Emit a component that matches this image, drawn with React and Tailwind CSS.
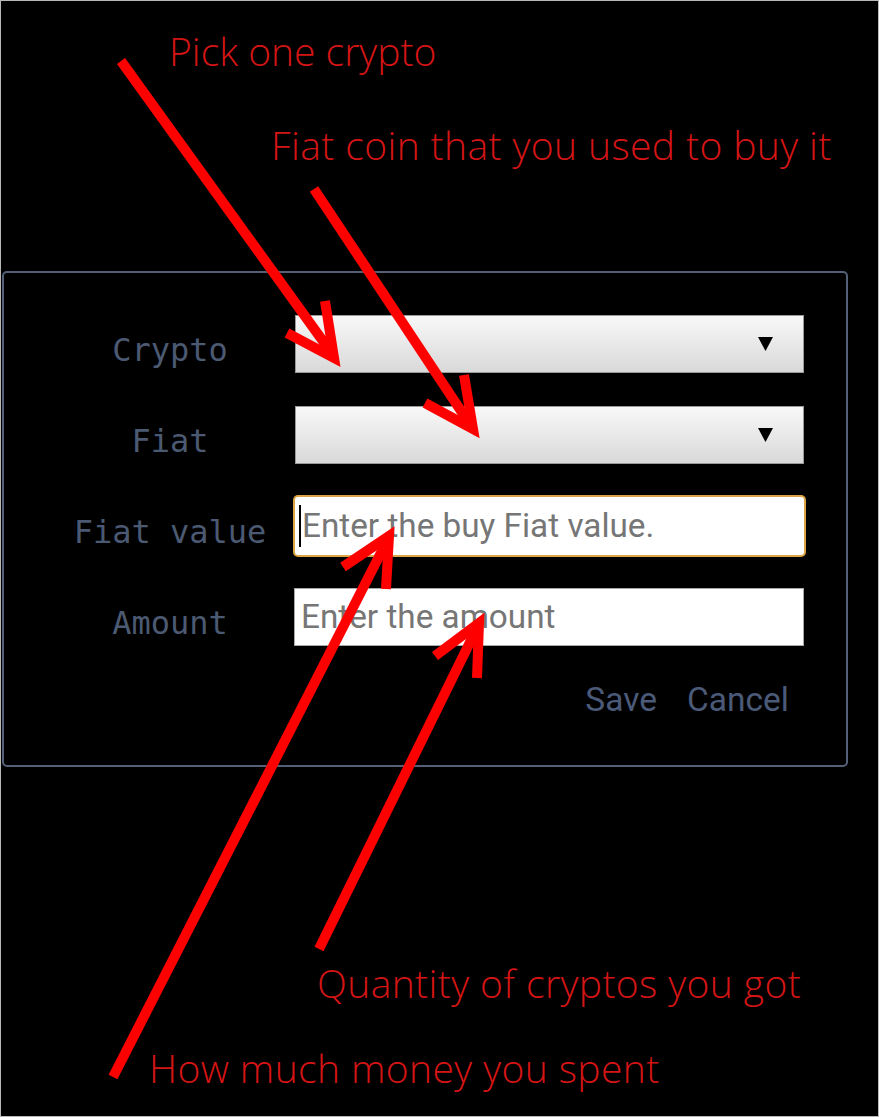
import React from "react";

function Arrow({ shaft, head }) {
  return (
    <g>
      <line x1={shaft[0]} y1={shaft[1]} x2={shaft[2]} y2={shaft[3]} stroke="#ff0000" strokeWidth="10" />
      <polyline points={head} fill="none" stroke="#ff0000" strokeWidth="10" strokeLinejoin="miter" strokeMiterlimit="10" />
    </g>
  );
}

function SelectBox() {
  return (
    <div className="flex h-[58px] w-[509px] items-center justify-end border border-[#9a9a9a] bg-gradient-to-b from-[#f8f8f8] to-[#d9d9d9] pr-[30px]">
      <svg width="15" height="14" viewBox="0 0 15 14">
        <polygon points="0,0 15,0 7.5,14" fill="#000" />
      </svg>
    </div>
  );
}

function Label({ children }) {
  return (
    <div className="w-[240px] pt-[12px] text-center text-[32px] leading-none text-[#4b5a72] [font-family:'DejaVu_Sans_Mono',monospace] whitespace-pre">
      {children}
    </div>
  );
}

export default function App() {
  return (
    <div className="relative h-[1117px] w-[879px] overflow-hidden border border-[#b8b8b8] bg-black">
      <div className="pt-[270px] pl-[1px]">
        <div className="w-[846px] rounded-[5px] border-2 border-[#536078] pt-[42px] pb-[44px] pl-[46px]">
          <div className="flex flex-col gap-[33px]">
            <div className="flex items-center">
              <Label>Crypto</Label>
              <div className="ml-[5px]">
                <SelectBox />
              </div>
            </div>
            <div className="flex items-center">
              <Label>Fiat</Label>
              <div className="ml-[5px]">
                <SelectBox />
              </div>
            </div>
            <div className="flex items-center">
              <Label>Fiat value</Label>
              <div className="ml-[5px] flex h-[58px] w-[509px] items-center rounded-[3px] bg-white pl-[4px] ring-2 ring-[#dca445] [font-family:Roboto,sans-serif]">
                <span className="mr-[1px] h-[42px] w-[2px] bg-black" />
                <span className="text-[33.3px] leading-none text-[#767676]">Enter the buy Fiat value.</span>
              </div>
            </div>
            <div className="flex items-center">
              <Label>Amount</Label>
              <div className="ml-[4px] flex h-[58px] w-[510px] items-center border border-[#a8a8a8] bg-white pl-[6px] [font-family:Roboto,sans-serif]">
                <span className="text-[33.3px] leading-none text-[#767676]">Enter the amount</span>
              </div>
            </div>
            <div className="flex h-[42px] items-center justify-end gap-[30px] pr-[57px] text-[33.5px] leading-none text-[#4a5a78] [font-family:Roboto,sans-serif]">
              <span>Save</span>
              <span>Cancel</span>
            </div>
          </div>
        </div>
      </div>

      <svg className="pointer-events-none absolute left-0 top-0" width="879" height="1117" viewBox="0 0 879 1117">
        <Arrow shaft={[120, 60, 332, 354]} head="324,300 333,357 286,332" />
        <Arrow shaft={[313, 188, 470, 425]} head="463,374 472,428 424,402" />
        <Arrow shaft={[112, 1076, 386, 540]} head="385,588 388,535 342,566" />
        <Arrow shaft={[318, 948, 476, 627]} head="476,677 478,622 434,655" />
      </svg>

      <div className="absolute left-[168px] top-[30px] whitespace-nowrap text-[39px] font-light leading-none text-[#d51515] [font-family:'Open_Sans',sans-serif]">
        Pick one crypto
      </div>
      <div className="absolute left-[270px] top-[124px] whitespace-nowrap text-[39px] font-light leading-none tracking-[0.4px] text-[#d51515] [font-family:'Open_Sans',sans-serif]">
        Fiat coin that you used to buy it
      </div>
      <div className="absolute left-[316px] top-[962px] whitespace-nowrap text-[39px] font-light leading-none tracking-[0.4px] text-[#d51515] [font-family:'Open_Sans',sans-serif]">
        Quantity of cryptos you got
      </div>
      <div className="absolute left-[148px] top-[1047px] whitespace-nowrap text-[39px] font-light leading-none tracking-[0.4px] text-[#d51515] [font-family:'Open_Sans',sans-serif]">
        How much money you spent
      </div>
    </div>
  );
}
